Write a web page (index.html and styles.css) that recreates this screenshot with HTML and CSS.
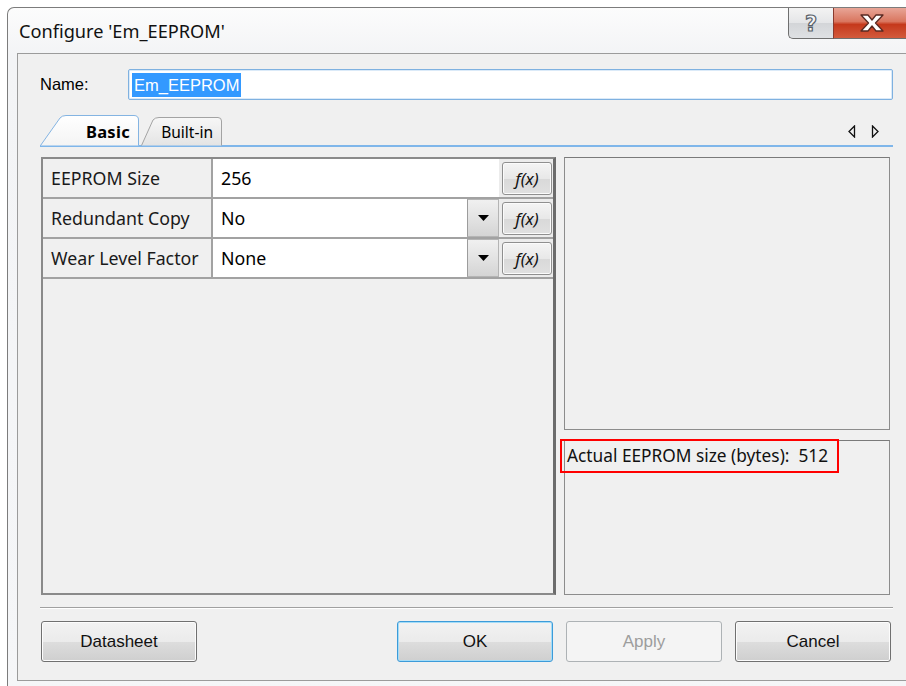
FILE: index.html
```html
<!DOCTYPE html>
<html>
<head>
<meta charset="utf-8">
<title>Configure 'Em_EEPROM'</title>
<link rel="stylesheet" href="styles.css">
</head>
<body>
<div class="window">
  <div class="titlebar">
    <span class="title">Configure 'Em_EEPROM'</span>
    <div class="caption-buttons">
      <div class="cap-btn help">
        <svg width="22" height="24" viewBox="0 0 22 24">
          <text x="11" y="20" text-anchor="middle" class="help-glyph">?</text>
        </svg>
      </div>
      <div class="cap-btn close">
        <svg width="28" height="20" viewBox="0 0 28 20">
          <path d="M3 2 H10 L14 7 L18 2 H25 L17.5 10 L25 18 H18 L14 13 L10 18 H3 L10.5 10 Z" fill="#fff" stroke="#5a2a22" stroke-width="1.3" stroke-linejoin="round"/>
        </svg>
      </div>
    </div>
  </div>

  <div class="client">
    <div class="name-row">
      <span class="name-label">Name:</span>
      <div class="name-input"><span class="selected">Em_EEPROM</span></div>
    </div>

    <div class="tabstrip">
      <div class="tab tab-active">
        <svg class="tab-shape" width="100" height="31" viewBox="0 0 100 31">
          <path d="M0.5 30.5 L20 3 Q22 0.5 26 0.5 L94 0.5 Q98.5 0.5 98.5 5 L98.5 30.5" fill="url(#tabActive)" stroke="#84b4e2"/>
          <defs>
            <linearGradient id="tabActive" x1="0" y1="0" x2="0" y2="1">
              <stop offset="0" stop-color="#ffffff"/>
              <stop offset="1" stop-color="#f4f4f4"/>
            </linearGradient>
          </defs>
        </svg>
        <span class="tab-label">Basic</span>
      </div>
      <div class="tab tab-idle">
        <svg class="tab-shape" width="82" height="30" viewBox="0 0 82 30">
          <path d="M0.5 29.5 L12 4 Q14 1.5 18 1.5 L77 1.5 Q80.5 1.5 80.5 5 L80.5 29.5" fill="url(#tabIdle)" stroke="#a3a3a3"/>
          <defs>
            <linearGradient id="tabIdle" x1="0" y1="0" x2="0" y2="1">
              <stop offset="0" stop-color="#f7f7f7"/>
              <stop offset="1" stop-color="#e4e4e4"/>
            </linearGradient>
          </defs>
        </svg>
        <span class="tab-label">Built-in</span>
      </div>
      <div class="tab-scroll">
        <svg width="8" height="13" viewBox="0 0 8 13"><path d="M6.5 1 L1 6.5 L6.5 12 Z" fill="none" stroke="#111" stroke-width="1.3" stroke-linejoin="miter"/></svg>
        <svg width="8" height="13" viewBox="0 0 8 13"><path d="M1.5 1 L7 6.5 L1.5 12 Z" fill="none" stroke="#111" stroke-width="1.3" stroke-linejoin="miter"/></svg>
      </div>
    </div>

    <div class="tabpage">
      <div class="grid">
        <div class="grid-row">
          <div class="cell-name">EEPROM Size</div>
          <div class="cell-value"><span class="value-text">256</span></div>
          <div class="cell-fx"><span class="fx-btn">f(x)</span></div>
        </div>
        <div class="grid-row">
          <div class="cell-name">Redundant Copy</div>
          <div class="cell-value"><span class="value-text">No</span><span class="drop-btn"><svg width="11" height="6" viewBox="0 0 11 6"><path d="M0 0 H11 L5.5 6 Z" fill="#000"/></svg></span></div>
          <div class="cell-fx"><span class="fx-btn">f(x)</span></div>
        </div>
        <div class="grid-row">
          <div class="cell-name">Wear Level Factor</div>
          <div class="cell-value"><span class="value-text">None</span><span class="drop-btn"><svg width="11" height="6" viewBox="0 0 11 6"><path d="M0 0 H11 L5.5 6 Z" fill="#000"/></svg></span></div>
          <div class="cell-fx"><span class="fx-btn">f(x)</span></div>
        </div>
      </div>
      <div class="side">
        <div class="side-panel side-top"></div>
        <div class="side-panel side-bottom">
          <span class="actual-size">Actual EEPROM size (bytes):&nbsp; 512</span>
          <div class="mark-box"></div>
        </div>
      </div>
    </div>

    <div class="separator"></div>

    <div class="buttons">
      <button class="btn">Datasheet</button>
      <span class="spacer"></span>
      <button class="btn btn-default">OK</button>
      <button class="btn btn-disabled">Apply</button>
      <button class="btn">Cancel</button>
    </div>
  </div>
</div>
</body>
</html>
```

FILE: styles.css
```css
html, body {
  margin: 0;
  overflow: hidden;
}

body {
  width: 906px;
  height: 686px;
  background: #ffffff;
  font-family: "Noto Sans", "Open Sans", sans-serif;
  color: #000;
}

/* ---------- window frame ---------- */
.window {
  box-sizing: border-box;
  margin: 7px 0 0 7px;
  width: 913px;
  height: 700px;
  border: 1px solid #7c7c7c;
  border-right: none;
  border-bottom: none;
  border-radius: 7px 0 0 0;
  background: linear-gradient(#fcfcfc, #f3f4f6 46px, #f5f6f8);
  padding-left: 9px;
  display: flex;
  flex-direction: column;
}

.titlebar {
  height: 45px;
  display: flex;
  align-items: flex-start;
}

.title {
  margin: 11px 0 0 2px;
  font-size: 18.2px;
  line-height: 24px;
  color: #111;
}

.caption-buttons {
  margin-left: auto;
  margin-right: 10px;
  display: flex;
}

.cap-btn {
  box-sizing: border-box;
  height: 31px;
  display: flex;
  align-items: center;
  justify-content: center;
  border: 1px solid #6f6f6f;
  border-top: none;
}

.help {
  width: 45px;
  border-right: none;
  border-radius: 0 0 0 5px;
  background: linear-gradient(#f3f3f3, #e4e5e7 50%, #d3d5d8 51%, #dfe1e4);
}

.help-glyph {
  font-family: "DejaVu Sans", sans-serif;
  font-weight: bold;
  font-size: 21px;
  fill: #f4f5f7;
  stroke: #596069;
  stroke-width: 1.2px;
}

.close {
  width: 77px;
  border-left: 1px solid #8a3a2e;
  background: linear-gradient(#e8a597, #d9765f 45%, #c5391c 55%, #d35a3c);
}

/* ---------- client area ---------- */
.client {
  box-sizing: border-box;
  width: 893px;
  height: 628px;
  border: 1px solid #9b9b9b;
  border-right: none;
  background: #f0f0f0;
  padding: 15px 17px 0 22px;
  display: flex;
  flex-direction: column;
}

.name-row {
  height: 31px;
  display: flex;
  align-items: center;
}

.name-label {
  width: 88px;
  font-family: "Liberation Sans", Arial, sans-serif;
  font-size: 16.5px;
}

.name-input {
  box-sizing: border-box;
  flex: 1;
  height: 31px;
  background: #fff;
  border: 1px solid #7fb1e0;
  border-radius: 2px;
  box-shadow: inset 0 0 0 1px #dbeaf8;
  padding: 3px 0 0 3px;
}

.selected {
  display: inline-block;
  height: 24px;
  line-height: 24px;
  padding: 0 2px;
  background: #3399ff;
  color: #fff;
  font-family: "Liberation Sans", Arial, sans-serif;
  font-size: 16.5px;
}

/* ---------- tabs ---------- */
.tabstrip {
  margin-top: 17px;
  height: 28px;
  border-bottom: 2px solid #7fb6ea;
  display: flex;
  align-items: flex-end;
}

.tab {
  position: relative;
  height: 30px;
  margin-bottom: -1px;
  display: flex;
  align-items: center;
  justify-content: flex-end;
}

.tab-shape {
  position: absolute;
  left: 0;
  top: 0;
}

.tab-label {
  position: relative;
  font-size: 15.5px;
  line-height: 20px;
  padding-top: 2px;
}

.tab-active {
  width: 100px;
  height: 31px;
  z-index: 2;
}

.tab-active .tab-label {
  font-weight: bold;
  font-size: 16.5px;
  letter-spacing: 0.3px;
  margin-right: 10px;
}

.tab-idle {
  width: 82px;
  margin-left: 1px;
  z-index: 1;
}

.tab-idle .tab-label {
  margin-right: 10px;
}

.tab-scroll {
  margin-left: auto;
  margin-right: 14px;
  align-self: center;
  display: flex;
  gap: 15px;
  padding-top: 1px;
}

/* ---------- tab page ---------- */
.tabpage {
  margin-top: 10px;
  height: 438px;
  padding-left: 1px;
  display: flex;
  gap: 8px;
}

.grid {
  box-sizing: border-box;
  width: 515px;
  height: 438px;
  border: 2px solid #8a8a8a;
  border-right-width: 3px;
  border-right-color: #6c6c6c;
  background: #f0f0f0;
}

.grid-row {
  height: 38px;
  border-bottom: 2px solid #a2a2a2;
  display: flex;
  font-size: 17.8px;
}

.cell-name {
  box-sizing: border-box;
  width: 170px;
  border-right: 2px solid #a2a2a2;
  padding-left: 8px;
  display: flex;
  align-items: center;
  color: #1a1a1a;
}

.cell-value {
  flex: 1;
  background: #fff;
  display: flex;
  align-items: stretch;
}

.value-text {
  flex: 1;
  padding-left: 8px;
  display: flex;
  align-items: center;
}

.drop-btn {
  box-sizing: border-box;
  width: 32px;
  border: 1px solid #b4b4b4;
  border-left-color: #9c9c9c;
  background: linear-gradient(#f0f0f0, #e3e3e3 50%, #d4d4d4);
  display: flex;
  align-items: center;
  justify-content: center;
}

.cell-fx {
  width: 54px;
  background: #ececec;
  padding: 3px 1px 2px 3px;
  box-sizing: border-box;
  display: flex;
}

.fx-btn {
  flex: 1;
  border: 1px solid #8f8f8f;
  border-radius: 3px;
  background: linear-gradient(#f4f4f4, #e8e8e8 50%, #d9d9d9 51%, #e0e0e0);
  box-shadow: inset 0 0 0 1px #fbfbfb;
  display: flex;
  align-items: center;
  justify-content: center;
  font-style: italic;
  font-size: 17px;
  color: #111;
}

.side {
  width: 326px;
  display: flex;
  flex-direction: column;
  gap: 10px;
}

.side-panel {
  box-sizing: border-box;
  border: 1px solid #8c8c8c;
  border-top-color: #7a7a7a;
  background: #f0f0f0;
}

.side-top {
  height: 273px;
}

.side-bottom {
  position: relative;
  flex: 1;
  padding: 2px 0 0 2px;
}

.actual-size {
  font-size: 17.3px;
  line-height: 25px;
  color: #111;
}

/* red annotation frame drawn over the panel edge */
.mark-box {
  position: absolute;
  left: -5px;
  top: -2px;
  width: 279px;
  height: 34px;
  box-sizing: border-box;
  border: 2px solid #ff0000;
}

/* ---------- footer ---------- */
.separator {
  margin-top: 12px;
  height: 0;
  border-top: 1px solid #a0a0a0;
  border-bottom: 1px solid #ffffff;
}

.buttons {
  margin-top: 12px;
  padding: 0 2px 0 1px;
  display: flex;
  gap: 13px;
}

.spacer {
  flex: 1;
}

.btn {
  box-sizing: border-box;
  width: 156px;
  height: 41px;
  margin: 0;
  padding: 0;
  border: 1px solid #707070;
  border-radius: 3px;
  background: linear-gradient(#f2f2f2, #ebebeb 50%, #dddddd 51%, #cfcfcf);
  box-shadow: inset 0 0 0 1px #fcfcfc;
  font-family: "Liberation Sans", Arial, sans-serif;
  font-size: 17px;
  color: #111;
}

.btn-default {
  border-color: #3c9bd9;
  box-shadow: inset 0 0 0 1px #a4dcf7;
}

.btn-disabled {
  border-color: #adb2b5;
  background: #f4f4f4;
  box-shadow: none;
  color: #9d9d9d;
}
```
